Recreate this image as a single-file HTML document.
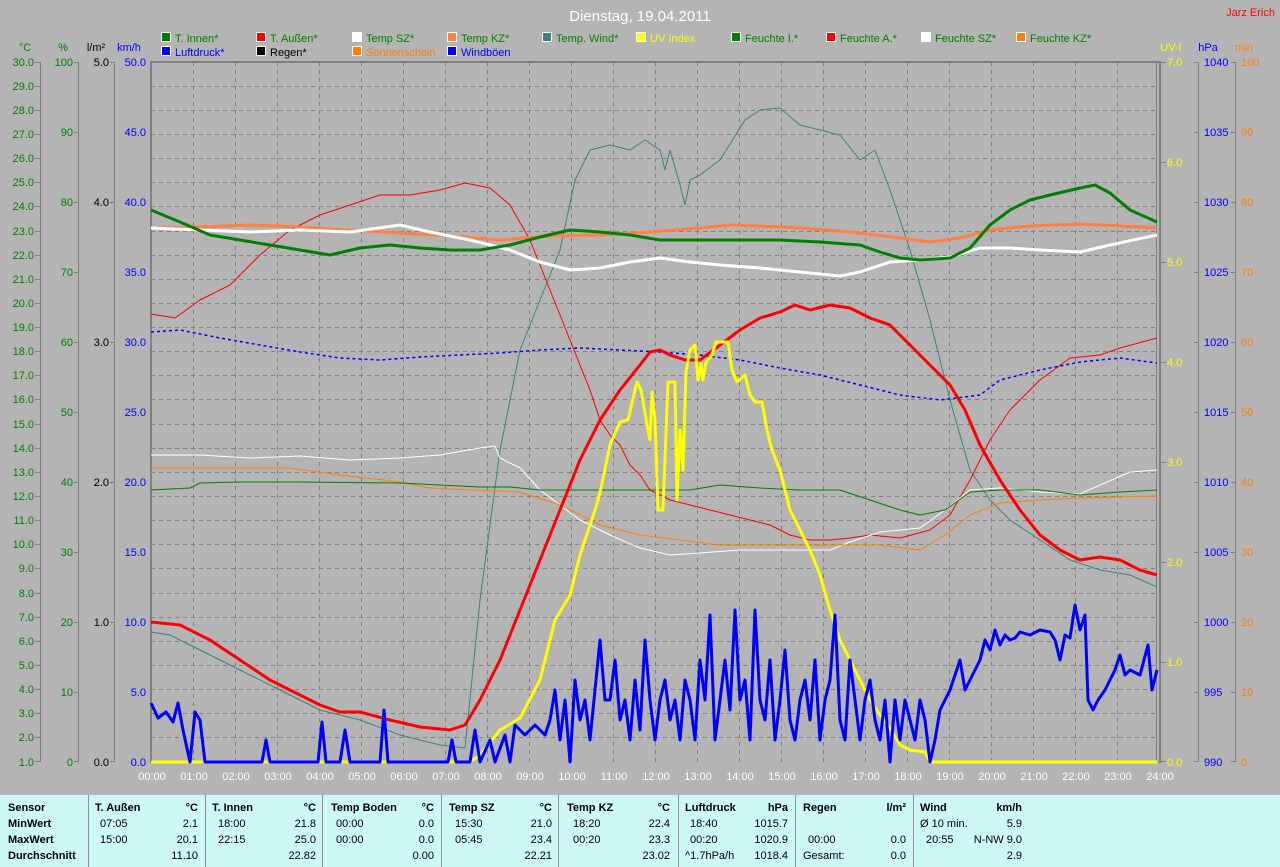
<!DOCTYPE html>
<html><head><meta charset="utf-8"><style>
body{margin:0;width:1280px;height:867px;overflow:hidden;background:#b4b4b4;font-family:"Liberation Sans",sans-serif;}
svg{position:absolute;left:0;top:0}
svg text{font-family:"Liberation Sans",sans-serif;font-size:11px}
#tbl{position:absolute;left:0;top:795px;width:1280px;height:72px;background:#ccf9f5;font-size:11px}
#tbl .c{position:absolute;top:0;height:72px;border-left:1px solid #909090}
#tbl span{position:absolute;white-space:nowrap}
.b{font-weight:bold}
</style></head><body>
<svg width="1280" height="795" viewBox="0 0 1280 795">
<text x="640" y="21" fill="#fff" text-anchor="middle" style="font-size:15px">Dienstag, 19.04.2011</text>
<text x="1275" y="16" fill="#f00" text-anchor="end">Jarz Erich</text>
<g stroke="#fff" stroke-width="1">
<rect x="161.5" y="32.5" width="9" height="9" fill="#008000"/><rect x="256.5" y="32.5" width="9" height="9" fill="#f00"/><rect x="352.5" y="32.5" width="9" height="9" fill="#fff"/><rect x="447.5" y="32.5" width="9" height="9" fill="#ff8040"/><rect x="542.5" y="32.5" width="9" height="9" fill="#408080"/><rect x="636.5" y="32.5" width="9" height="9" fill="#ff0"/><rect x="731.5" y="32.5" width="9" height="9" fill="#008000"/><rect x="826.5" y="32.5" width="9" height="9" fill="#f00"/><rect x="921.5" y="32.5" width="9" height="9" fill="#fff"/><rect x="1016.5" y="32.5" width="9" height="9" fill="#ff8000"/>
<rect x="161.5" y="46.5" width="9" height="9" fill="#00f"/><rect x="256.5" y="46.5" width="9" height="9" fill="#000"/><rect x="352.5" y="46.5" width="9" height="9" fill="#ff8000"/><rect x="447.5" y="46.5" width="9" height="9" fill="#00f"/>
</g>
<g fill="#008000">
<text x="175" y="42">T. Innen*</text><text x="270" y="42">T. Außen*</text><text x="366" y="42">Temp SZ*</text><text x="461" y="42">Temp KZ*</text><text x="556" y="42">Temp. Wind*</text><text x="650" y="42" fill="#ff0">UV Index</text><text x="745" y="42">Feuchte I.*</text><text x="840" y="42">Feuchte A.*</text><text x="935" y="42">Feuchte SZ*</text><text x="1030" y="42">Feuchte KZ*</text>
</g>
<text x="175" y="56" fill="#00f">Luftdruck*</text><text x="270" y="56" fill="#000">Regen*</text><text x="366" y="56" fill="#ff8000">Sonnenschein</text><text x="461" y="56" fill="#00f">Windböen</text>
<text x="25" y="51" fill="#008000" text-anchor="middle">°C</text><text x="63" y="51" fill="#008000" text-anchor="middle">%</text><text x="96" y="51" fill="#000" text-anchor="middle">l/m²</text><text x="129" y="51" fill="#00f" text-anchor="middle">km/h</text>
<text x="1171" y="51" fill="#ff0" text-anchor="middle">UV-I</text><text x="1208" y="51" fill="#00f" text-anchor="middle">hPa</text><text x="1244" y="51" fill="#ff8000" text-anchor="middle">min</text>
<!-- grid -->
<g stroke="#808080" stroke-dasharray="4,4" stroke-width="1">
<path d="M151 86.5H1157M151 110.5H1157M151 134.5H1157M151 158.5H1157M151 182.5H1157M151 206.5H1157M151 231.5H1157M151 255.5H1157M151 279.5H1157M151 303.5H1157M151 327.5H1157M151 351.5H1157M151 375.5H1157M151 399.5H1157M151 424.5H1157M151 448.5H1157M151 472.5H1157M151 496.5H1157M151 520.5H1157M151 544.5H1157M151 568.5H1157M151 593.5H1157M151 617.5H1157M151 641.5H1157M151 665.5H1157M151 689.5H1157M151 713.5H1157M151 737.5H1157"/>
<path d="M193.5 62V762M235.5 62V762M277.5 62V762M319.5 62V762M361.5 62V762M403.5 62V762M445.5 62V762M487.5 62V762M529.5 62V762M571.5 62V762M613.5 62V762M655.5 62V762M697.5 62V762M739.5 62V762M781.5 62V762M823.5 62V762M865.5 62V762M907.5 62V762M949.5 62V762M991.5 62V762M1033.5 62V762M1075.5 62V762M1117.5 62V762"/>
</g>
<g stroke="#808080" fill="none">
<path d="M150 62H1161" stroke-width="2"/><path d="M151 62V763" stroke-width="2"/><path d="M1160 62V763" stroke-width="2"/><path d="M1156.5 62V762"/>
<path d="M40.5 62V762M78.5 62V762M114.5 62V762M1198.5 62V762M1235.5 62V762"/>
<path d="M35 62.5h5M35 86.5h5M35 110.5h5M35 134.5h5M35 158.5h5M35 182.5h5M35 206.5h5M35 231.5h5M35 255.5h5M35 279.5h5M35 303.5h5M35 327.5h5M35 351.5h5M35 375.5h5M35 399.5h5M35 424.5h5M35 448.5h5M35 472.5h5M35 496.5h5M35 520.5h5M35 544.5h5M35 568.5h5M35 593.5h5M35 617.5h5M35 641.5h5M35 665.5h5M35 689.5h5M35 713.5h5M35 737.5h5M35 761.5h5"/>
<path d="M74 62.5h5M74 132.5h5M74 202.5h5M74 272.5h5M74 342.5h5M74 412.5h5M74 482.5h5M74 552.5h5M74 622.5h5M74 692.5h5M74 761.5h5"/>
<path d="M110 62.5h5M110 202.5h5M110 342.5h5M110 482.5h5M110 622.5h5M110 761.5h5"/>
<path d="M1161 62.5h5M1161 162.5h5M1161 262.5h5M1161 362.5h5M1161 462.5h5M1161 562.5h5M1161 662.5h5M1161 761.5h5"/>
<path d="M1194 62.5h5M1194 132.5h5M1194 202.5h5M1194 272.5h5M1194 342.5h5M1194 412.5h5M1194 482.5h5M1194 552.5h5M1194 622.5h5M1194 692.5h5M1194 761.5h5"/>
<path d="M1231 62.5h5M1231 132.5h5M1231 202.5h5M1231 272.5h5M1231 342.5h5M1231 412.5h5M1231 482.5h5M1231 552.5h5M1231 622.5h5M1231 692.5h5M1231 761.5h5"/>
</g>
<g fill="#008000" text-anchor="end">
<text x="34" y="66">30.0</text><text x="34" y="90">29.0</text><text x="34" y="114">28.0</text><text x="34" y="138">27.0</text><text x="34" y="162">26.0</text><text x="34" y="186">25.0</text><text x="34" y="210">24.0</text><text x="34" y="235">23.0</text><text x="34" y="259">22.0</text><text x="34" y="283">21.0</text><text x="34" y="307">20.0</text><text x="34" y="331">19.0</text><text x="34" y="355">18.0</text><text x="34" y="379">17.0</text><text x="34" y="403">16.0</text><text x="34" y="428">15.0</text><text x="34" y="452">14.0</text><text x="34" y="476">13.0</text><text x="34" y="500">12.0</text><text x="34" y="524">11.0</text><text x="34" y="548">10.0</text><text x="34" y="572">9.0</text><text x="34" y="597">8.0</text><text x="34" y="621">7.0</text><text x="34" y="645">6.0</text><text x="34" y="669">5.0</text><text x="34" y="693">4.0</text><text x="34" y="717">3.0</text><text x="34" y="741">2.0</text><text x="34" y="766">1.0</text>
<text x="73" y="66">100</text><text x="73" y="136">90</text><text x="73" y="206">80</text><text x="73" y="276">70</text><text x="73" y="346">60</text><text x="73" y="416">50</text><text x="73" y="486">40</text><text x="73" y="556">30</text><text x="73" y="626">20</text><text x="73" y="696">10</text><text x="73" y="766">0</text>
</g>
<g fill="#000" text-anchor="end"><text x="109" y="66">5.0</text><text x="109" y="206">4.0</text><text x="109" y="346">3.0</text><text x="109" y="486">2.0</text><text x="109" y="626">1.0</text><text x="109" y="766">0.0</text></g>
<g fill="#00f" text-anchor="end"><text x="146" y="66">50.0</text><text x="146" y="136">45.0</text><text x="146" y="206">40.0</text><text x="146" y="276">35.0</text><text x="146" y="346">30.0</text><text x="146" y="416">25.0</text><text x="146" y="486">20.0</text><text x="146" y="556">15.0</text><text x="146" y="626">10.0</text><text x="146" y="696">5.0</text><text x="146" y="766">0.0</text></g>
<g fill="#ff0"><text x="1167" y="66">7.0</text><text x="1167" y="166">6.0</text><text x="1167" y="266">5.0</text><text x="1167" y="366">4.0</text><text x="1167" y="466">3.0</text><text x="1167" y="566">2.0</text><text x="1167" y="666">1.0</text><text x="1167" y="766">0.0</text></g>
<g fill="#00f"><text x="1204" y="66">1040</text><text x="1204" y="136">1035</text><text x="1204" y="206">1030</text><text x="1204" y="276">1025</text><text x="1204" y="346">1020</text><text x="1204" y="416">1015</text><text x="1204" y="486">1010</text><text x="1204" y="556">1005</text><text x="1204" y="626">1000</text><text x="1204" y="696">995</text><text x="1204" y="766">990</text></g>
<g fill="#ff8000"><text x="1241" y="66">100</text><text x="1241" y="136">90</text><text x="1241" y="206">80</text><text x="1241" y="276">70</text><text x="1241" y="346">60</text><text x="1241" y="416">50</text><text x="1241" y="486">40</text><text x="1241" y="556">30</text><text x="1241" y="626">20</text><text x="1241" y="696">10</text><text x="1241" y="766">0</text></g>
<g fill="#fff" text-anchor="middle">
<text x="152" y="780">00:00</text><text x="194" y="780">01:00</text><text x="236" y="780">02:00</text><text x="278" y="780">03:00</text><text x="320" y="780">04:00</text><text x="362" y="780">05:00</text><text x="404" y="780">06:00</text><text x="446" y="780">07:00</text><text x="488" y="780">08:00</text><text x="530" y="780">09:00</text><text x="572" y="780">10:00</text><text x="614" y="780">11:00</text><text x="656" y="780">12:00</text><text x="698" y="780">13:00</text><text x="740" y="780">14:00</text><text x="782" y="780">15:00</text><text x="824" y="780">16:00</text><text x="866" y="780">17:00</text><text x="908" y="780">18:00</text><text x="950" y="780">19:00</text><text x="992" y="780">20:00</text><text x="1034" y="780">21:00</text><text x="1076" y="780">22:00</text><text x="1118" y="780">23:00</text><text x="1160" y="780">24:00</text>
</g>
<!-- curves -->
<g fill="none" stroke-linejoin="round">
<polyline stroke="#408080" stroke-width="1" points="151,632 170,635 200,650 240,670 280,690 320,710 360,720 400,735 440,745 465,748 480,600 500,450 520,350 540,300 560,250 575,180 590,150 610,145 630,150 645,140 660,150 665,170 670,150 680,185 685,205 690,180 700,175 720,160 745,120 760,110 780,108 800,125 820,130 840,135 860,160 875,150 890,190 910,250 930,320 950,400 970,470 990,500 1010,520 1040,540 1070,560 1100,570 1130,575 1157,587"/>
<polyline stroke="#f00" stroke-width="1" points="151,314 175,318 200,300 230,285 260,255 290,230 320,215 350,205 380,195 410,195 440,190 465,183 490,188 510,205 530,240 550,290 570,340 590,390 600,420 610,435 620,445 630,465 640,475 650,490 670,500 690,505 710,510 730,515 750,520 770,525 790,535 810,540 830,540 850,538 870,535 900,538 930,530 950,515 970,480 990,440 1010,410 1040,380 1070,358 1100,355 1120,348 1157,338"/>
<polyline stroke="#fff" stroke-width="1" points="151,455 200,455 250,458 300,456 350,460 400,458 440,455 480,448 495,446 500,458 520,468 540,490 560,505 580,520 610,535 640,548 670,555 700,553 740,550 780,550 830,550 850,542 880,532 920,528 945,510 970,490 1000,488 1040,492 1080,494 1100,485 1130,472 1157,470"/>
<polyline stroke="#ff8000" stroke-width="1" points="151,468 290,468 340,475 400,482 430,488 470,490 520,492 560,505 600,525 640,535 680,540 720,545 800,545 880,545 920,550 945,535 970,515 1000,503 1040,500 1080,498 1157,496"/>
<polyline stroke="#008000" stroke-width="1" points="151,490 190,488 200,483 240,482 300,482 400,483 480,487 510,487 540,490 600,490 640,490 690,490 720,485 760,488 800,490 840,490 870,500 900,510 920,515 945,510 970,492 1000,490 1040,490 1080,495 1120,492 1157,490"/>
<polyline stroke="#00f" stroke-width="1.5" stroke-dasharray="3,3" points="151,332 180,330 220,338 260,345 300,352 340,358 380,360 420,357 460,355 500,353 540,350 580,348 620,350 660,352 700,355 740,360 780,368 820,375 860,385 900,395 940,400 980,395 1000,380 1040,370 1080,362 1120,358 1157,363"/>
<polyline stroke="#ff8040" stroke-width="3" points="151,228 200,227 250,225 300,227 350,230 400,233 450,236 500,240 550,236 600,235 650,232 700,228 730,225 760,226 800,228 850,232 900,238 930,242 960,238 990,230 1030,226 1080,224 1120,226 1157,228"/>
<polyline stroke="#fff" stroke-width="3" points="151,228 200,230 250,232 300,230 350,232 400,225 430,232 470,240 510,250 540,262 570,270 600,268 630,262 660,258 690,262 720,265 760,268 800,272 840,276 860,272 890,262 920,260 950,257 980,248 1010,248 1040,250 1080,252 1110,245 1157,235"/>
<polyline stroke="#008000" stroke-width="3" points="151,210 180,222 210,235 240,240 270,245 300,250 330,255 360,248 390,245 420,248 450,250 480,250 510,245 540,237 570,230 600,232 630,235 660,240 700,240 740,240 780,240 820,242 860,245 880,252 900,258 920,260 950,258 970,248 990,225 1010,210 1030,200 1050,195 1080,188 1095,185 1110,193 1130,210 1157,222"/>
<polyline stroke="#f00" stroke-width="3" points="151,622 180,625 210,640 240,660 270,680 300,695 320,705 340,712 360,712 390,720 420,727 450,730 465,725 480,700 500,660 520,610 540,560 560,510 580,460 600,420 620,390 640,365 650,352 660,350 670,355 685,360 700,360 720,345 740,330 760,318 780,312 795,305 810,310 830,305 850,308 870,318 890,325 910,345 930,365 950,385 965,410 980,445 1000,480 1020,510 1040,535 1060,550 1080,560 1100,557 1120,560 1140,570 1157,575"/>
<polyline stroke="#ff0" stroke-width="3" points="151,762 470,762 480,755 500,730 520,718 540,680 555,620 570,595 580,555 595,510 600,493 610,445 620,422 628,420 637,382 641,390 648,430 650,440 652,392 655,420 658,510 663,510 668,382 675,382 677,500 680,430 683,470 686,372 690,350 695,345 698,380 701,364 703,380 706,362 712,355 716,342 728,342 732,370 737,382 745,375 750,395 755,402 762,402 767,430 772,450 780,470 790,510 800,530 810,550 820,575 830,610 840,640 850,660 860,680 870,700 880,715 890,728 900,745 910,750 925,752 930,762 1157,762"/>
<polyline stroke="#00f" stroke-width="3" points="151,703 158,718 166,712 173,722 178,703 183,730 190,762 195,712 200,720 205,762 262,762 266,740 270,762 318,762 322,722 326,762 340,762 345,730 350,762 380,762 384,710 388,762 448,762 452,740 456,762 470,762 475,730 480,762 490,740 495,762 505,735 510,762 515,725 525,735 535,725 545,735 550,720 555,690 560,740 565,700 570,762 575,680 580,720 585,700 590,740 595,690 600,640 605,700 610,700 615,660 620,720 625,700 630,740 635,680 640,730 645,640 650,700 655,740 660,700 665,680 670,720 675,700 680,740 685,680 690,700 695,740 700,660 705,700 710,615 715,740 720,700 725,660 730,710 735,610 740,700 745,680 750,740 755,610 760,700 765,720 770,660 775,740 780,700 785,650 790,720 795,740 800,700 805,680 810,720 815,660 820,740 825,700 830,680 835,615 840,720 845,740 850,660 855,700 860,740 865,700 870,680 875,720 880,740 885,700 890,762 895,700 900,740 905,700 910,720 915,740 920,700 925,720 930,762 935,740 940,710 945,700 950,690 955,675 960,660 965,690 970,680 975,670 980,660 985,640 990,650 995,630 1000,645 1005,635 1010,640 1015,638 1020,632 1030,635 1040,630 1050,632 1055,640 1060,660 1065,635 1070,638 1075,605 1080,630 1085,615 1088,700 1093,710 1098,700 1105,690 1110,680 1115,670 1120,655 1125,675 1130,670 1140,675 1148,645 1152,690 1157,670"/>
</g>
</svg>
<div id="tbl">
<div class="c" style="left:88px"></div><div class="c" style="left:205px"></div><div class="c" style="left:322px"></div><div class="c" style="left:441px"></div><div class="c" style="left:558px"></div><div class="c" style="left:678px"></div><div class="c" style="left:795px"></div><div class="c" style="left:913px"></div>
<span class="b" style="left:8px;top:7px">Sensor</span><span class="b" style="left:8px;top:23px">MinWert</span><span class="b" style="left:8px;top:39px">MaxWert</span><span class="b" style="left:8px;top:55px">Durchschnitt</span>
<span class="b" style="left:95px;top:7px">T. Außen</span><span class="b" style="right:1082px;top:7px">°C</span><span style="left:100px;top:23px">07:05</span><span style="right:1082px;top:23px">2.1</span><span style="left:100px;top:39px">15:00</span><span style="right:1082px;top:39px">20.1</span><span style="right:1082px;top:55px">11.10</span>
<span class="b" style="left:212px;top:7px">T. Innen</span><span class="b" style="right:964px;top:7px">°C</span><span style="left:218px;top:23px">18:00</span><span style="right:964px;top:23px">21.8</span><span style="left:218px;top:39px">22:15</span><span style="right:964px;top:39px">25.0</span><span style="right:964px;top:55px">22.82</span>
<span class="b" style="left:331px;top:7px">Temp Boden</span><span class="b" style="right:846px;top:7px">°C</span><span style="left:336px;top:23px">00:00</span><span style="right:846px;top:23px">0.0</span><span style="left:336px;top:39px">00:00</span><span style="right:846px;top:39px">0.0</span><span style="right:846px;top:55px">0.00</span>
<span class="b" style="left:449px;top:7px">Temp SZ</span><span class="b" style="right:728px;top:7px">°C</span><span style="left:455px;top:23px">15:30</span><span style="right:728px;top:23px">21.0</span><span style="left:455px;top:39px">05:45</span><span style="right:728px;top:39px">23.4</span><span style="right:728px;top:55px">22.21</span>
<span class="b" style="left:567px;top:7px">Temp KZ</span><span class="b" style="right:610px;top:7px">°C</span><span style="left:573px;top:23px">18:20</span><span style="right:610px;top:23px">22.4</span><span style="left:573px;top:39px">00:20</span><span style="right:610px;top:39px">23.3</span><span style="right:610px;top:55px">23.02</span>
<span class="b" style="left:685px;top:7px">Luftdruck</span><span class="b" style="right:492px;top:7px">hPa</span><span style="left:690px;top:23px">18:40</span><span style="right:492px;top:23px">1015.7</span><span style="left:690px;top:39px">00:20</span><span style="right:492px;top:39px">1020.9</span><span style="left:685px;top:55px">^1.7hPa/h</span><span style="right:492px;top:55px">1018.4</span>
<span class="b" style="left:803px;top:7px">Regen</span><span class="b" style="right:374px;top:7px">l/m²</span><span style="left:808px;top:39px">00:00</span><span style="right:374px;top:39px">0.0</span><span style="left:803px;top:55px">Gesamt:</span><span style="right:374px;top:55px">0.0</span>
<span class="b" style="left:920px;top:7px">Wind</span><span class="b" style="right:258px;top:7px">km/h</span><span style="left:920px;top:23px">Ø 10 min.</span><span style="right:258px;top:23px">5.9</span><span style="left:926px;top:39px">20:55</span><span style="right:258px;top:39px">N-NW 9.0</span><span style="right:258px;top:55px">2.9</span>
</div>
</body></html>
